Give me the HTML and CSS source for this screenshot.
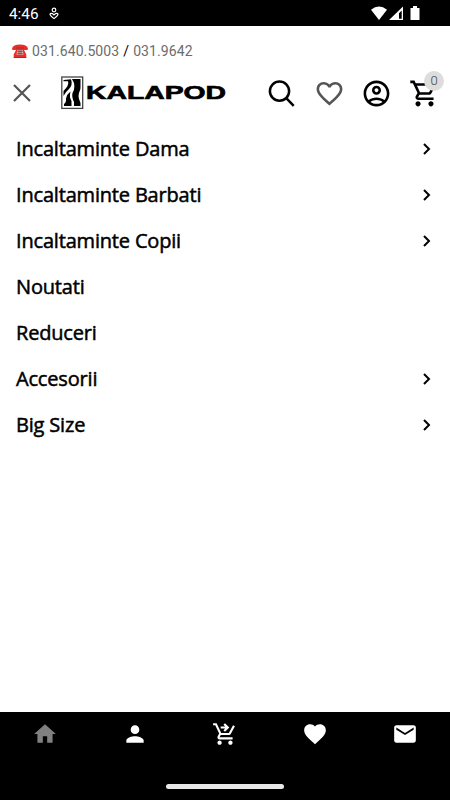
FILE: index.html
```html
<!DOCTYPE html>
<html lang="ro">
<head>
    <meta charset="UTF-8">
    <meta name="viewport" content="width=device-width, initial-scale=1.0">
    <title>Kalapod</title>
    <link rel="stylesheet" href="styles.css">
</head>
<body>
    <div class="status-bar">
        <span class="clock">4:46</span>
        <svg class="status-app" viewBox="0 0 10 14" width="10" height="14">
            <circle cx="5" cy="3" r="1.8"/>
            <path d="M3.4 6.6 Q1.5 5.8 1 7.2 Q1 8.4 5 11.6 Q9 8.4 9 7.2 Q8.500 5.800 6.600 6.600 L5 8 Z"/>
        </svg>
        <svg class="status-system" viewBox="0 0 50 16" width="50" height="16">
            <path d="M0 3.7 Q8 -2.7 16 3.7 L8 14 Z"/>
            <path fill-rule="evenodd" d="M32 0.5 V14 H18 Z M30.7 4.5 L28 7.2 V12.7 H30.7 Z"/>
            <path d="M39.5 2 H42 V0 H46 V2 H48.5 V14 H39.5 Z"/>
        </svg>
    </div>

    <div class="phone-row">
        <svg class="phone-icon" viewBox="0 0 16 14" width="16" height="14">
            <path fill="#e8302a" d="M0 4.500 Q1 0.500 8 0.500 Q15 0.500 16 4.500 L15.500 6 H12 L14.300 10.500 V13.500 H1.700 V10.500 L4 6 H0.500 Z"/>
            <path fill="#a82a25" d="M4 3.500 H12 V4.500 H4 Z M1.700 13 H14.300 V14 H1.700 Z"/>
            <path fill="#f3dddd" d="M5.500 6 H10.500 L11.500 10.500 H4.500 Z"/>
            <path stroke="#6b3030" stroke-width="0.8" d="M5.300 7.300 H10.700 M5 9.300 H11 M7 6 V10.500 M9 6 V10.500"/>
        </svg>
        <a class="phone">031.640.5003</a>
        <span class="slash">/</span>
        <a class="phone">031.9642</a>
    </div>

    <header class="header">
        <svg class="close" viewBox="0 0 18 18" width="18" height="18">
            <path d="M1 1 L17 17 M17 1 L1 17"/>
        </svg>
        <svg class="logo" viewBox="0 0 166 34" width="166" height="34">
            <rect x="0.8" y="1" width="20.9" height="31.400" fill="#fff" stroke="#444" stroke-width="1.300"/>
            <path d="M11 3 H19.500 V10 Q20 13 18 17 Q17 20 18 23 L19.500 27 V30 H13 V26 Q10.500 21 11.500 17 Q15.500 10 11 3 Z"/>
            <path d="M2.500 4 L10 3.300 Q12 9 8 13 Q4.500 16 2.500 20 V15 Q8.500 9 7 5.300 L2.500 5.300 Z"/>
            <path d="M9.500 15.500 Q8 21 10.500 25 V30 H3 V28 Q5.500 26 5 22.500 Q6 18 9.500 15.500 Z"/>
            <text class="logo-text" x="25" y="23" textLength="140" lengthAdjust="spacingAndGlyphs">KALAPOD</text>
        </svg>
        <div class="actions">
            <svg class="icon search" viewBox="0 0 30 30" width="30" height="30">
                <circle cx="13.500" cy="12.700" r="9.600"/>
                <path d="M20.300 19.700 L27.700 27.300"/>
            </svg>
            <svg class="icon wish" viewBox="0 0 24 24">
                <path d="M16.5 3c-1.74 0-3.41.81-4.5 2.09C10.91 3.81 9.24 3 7.5 3 4.42 3 2 5.42 2 8.5c0 3.78 3.4 6.86 8.55 11.54L12 21.35l1.45-1.32C18.6 15.36 22 12.28 22 8.5 22 5.42 19.58 3 16.5 3zm-4.4 15.55l-.1.1-.1-.1C7.14 14.24 4 11.39 4 8.5 4 6.5 5.5 5 7.5 5c1.54 0 3.04.99 3.57 2.36h1.87C13.46 5.99 14.96 5 16.5 5c2 0 3.5 1.5 3.5 3.5 0 2.89-3.14 5.74-7.9 10.05z"/>
            </svg>
            <svg class="icon account" viewBox="0 0 24 24">
                <path d="M12 2C6.48 2 2 6.48 2 12s4.48 10 10 10 10-4.48 10-10S17.52 2 12 2zM7.35 18.5C8.66 17.56 10.26 17 12 17s3.34.56 4.65 1.5C15.34 19.44 13.74 20 12 20s-3.34-.56-4.65-1.5zm10.79-1.38C16.45 15.8 14.32 15 12 15s-4.45.8-6.14 2.12C4.7 15.73 4 13.95 4 12c0-4.42 3.58-8 8-8s8 3.58 8 8c0 1.95-.7 3.73-1.86 5.12z"/>
                <path d="M12 6c-1.93 0-3.5 1.57-3.5 3.5S10.07 13 12 13s3.5-1.57 3.5-3.5S13.93 6 12 6zm0 5c-.83 0-1.5-.67-1.5-1.5S11.17 8 12 8s1.5.67 1.5 1.5S12.83 11 12 11z"/>
            </svg>
            <div class="cart">
                <svg class="icon" viewBox="0 0 24 24">
                    <path d="M15.55 13c.75 0 1.41-.41 1.75-1.03l3.58-6.49c.37-.66-.11-1.48-.87-1.48H5.21l-.94-2H1v2h2l3.6 7.59-1.35 2.44C4.52 15.37 5.48 17 7 17h12v-2H7l1.1-2h7.45zM6.16 6h12.15l-2.76 5H8.53L6.16 6zM7 18c-1.1 0-1.99.9-1.99 2S5.9 22 7 22s2-.9 2-2-.9-2-2-2zm10 0c-1.1 0-1.99.9-1.99 2s.89 2 1.99 2 2-.9 2-2-.9-2-2-2z"/>
                </svg>
                <span class="badge">0</span>
            </div>
        </div>
    </header>

    <nav class="menu">
        <a class="menu-item">Incaltaminte Dama <svg class="arrow" viewBox="0 0 8 12"><path d="M1 1 L6 6 L1 11"/></svg></a>
        <a class="menu-item">Incaltaminte Barbati <svg class="arrow" viewBox="0 0 8 12"><path d="M1 1 L6 6 L1 11"/></svg></a>
        <a class="menu-item">Incaltaminte Copii <svg class="arrow" viewBox="0 0 8 12"><path d="M1 1 L6 6 L1 11"/></svg></a>
        <a class="menu-item">Noutati</a>
        <a class="menu-item">Reduceri</a>
        <a class="menu-item">Accesorii <svg class="arrow" viewBox="0 0 8 12"><path d="M1 1 L6 6 L1 11"/></svg></a>
        <a class="menu-item">Big Size <svg class="arrow" viewBox="0 0 8 12"><path d="M1 1 L6 6 L1 11"/></svg></a>
    </nav>

    <footer class="bottom-bar">
        <div class="tabs">
            <svg class="tab active" viewBox="0 0 24 24"><path d="M10 20v-6h4v6h5v-8h3L12 3 2 12h3v8z"/></svg>
            <svg class="tab" viewBox="0 0 24 24"><path d="M12 12c2.21 0 4-1.79 4-4s-1.79-4-4-4-4 1.79-4 4 1.79 4 4 4zm0 2c-2.67 0-8 1.34-8 4v2h16v-2c0-2.66-5.33-4-8-4z"/></svg>
            <svg class="tab" viewBox="0 0 24 24"><path d="M7 18c-1.1 0-1.99.9-1.99 2S5.9 22 7 22s2-.9 2-2-.9-2-2-2zm10 0c-1.1 0-1.99.9-1.99 2s.89 2 1.99 2 2-.9 2-2-.9-2-2-2zM8.1 13h7.45c.75 0 1.41-.41 1.75-1.03L21.16 4.96 19.42 4l-3.87 7H8.53L4.27 2H1v2h2l3.6 7.59-1.35 2.44C4.52 15.37 5.48 17 7 17h12v-2H7l1.1-2zM12 2l4 4-4 4-1.41-1.41L12.17 7H8V5h4.17l-1.59-1.59L12 2z"/></svg>
            <svg class="tab" viewBox="0 0 24 24"><path d="M12 21.35l-1.45-1.32C5.4 15.36 2 12.28 2 8.5 2 5.42 4.42 3 7.5 3c1.74 0 3.41.81 4.5 2.09C13.09 3.81 14.76 3 16.5 3 19.58 3 22 5.42 22 8.5c0 3.78-3.4 6.86-8.55 11.54L12 21.35z"/></svg>
            <svg class="tab" viewBox="0 0 24 24"><path d="M20 4H4c-1.1 0-1.99.9-1.99 2L2 18c0 1.1.9 2 2 2h16c1.1 0 2-.9 2-2V6c0-1.1-.9-2-2-2zm0 4l-8 5-8-5V6l8 5 8-5v2z"/></svg>
        </div>
        <div class="home-indicator"></div>
    </footer>
</body>
</html>
```

FILE: styles.css
```css
* {
    box-sizing: border-box;
}

body {
    margin: 0;
    height: 800px;
    display: flex;
    flex-direction: column;
    overflow: hidden;
    background-color: #fff;
    color: #000;
    font-family: Roboto, sans-serif;
}

svg {
    display: block;
    flex: none;
}

.status-bar {
    height: 26px;
    display: flex;
    align-items: center;
    padding: 2px 29px 0 9px;
    background-color: #000;
    color: #fff;
}

.clock {
    font-size: 15.3px;
    line-height: 26px;
}

.status-app {
    margin-left: 10px;
    fill: none;
    stroke: #fff;
    stroke-width: 1.2;
}

.status-system {
    margin-left: auto;
    fill: #fff;
}

/* Phone numbers */
.phone-row {
    height: 50px;
    display: flex;
    align-items: center;
    padding-left: 12px;
    font-size: 14px;
    letter-spacing: 0.1px;
}

.phone {
    color: #6c6c6c;
}

.phone-icon {
    margin-right: 4px;
}

.slash {
    margin: 0 4px;
}

/* Header */
.header {
    height: 34px;
    display: flex;
    align-items: center;
    padding: 0 5px 0 13px;
}

.close {
    fill: none;
    stroke: #555;
    stroke-width: 2.2;
}

.logo {
    margin-left: 30px;
}

.logo-text {
    font-family: "Liberation Sans", Arial, sans-serif;
    font-size: 17.5px;
    font-weight: bold;
    stroke: #000;
    stroke-width: 0.6;
}

.actions {
    display: flex;
    flex: 1;
    margin-left: 39px;
}

.icon {
    width: 31px;
    height: 31px;
}

.search {
    width: 30px;
    fill: none;
    stroke: #000;
    stroke-width: 2.5;
}

.wish {
    margin-left: 18px;
    fill: #555;
}

.account {
    margin-left: 16px;
}

.cart {
    position: relative;
    margin-left: 17px;
}

.badge {
    position: absolute;
    top: -7px;
    left: 15px;
    width: 20px;
    height: 20px;
    border-radius: 50%;
    background-color: #ddd;
    color: #444;
    font-size: 13px;
    font-weight: 300;
    line-height: 20px;
    text-align: center;
}

/* Menu */
.menu {
    flex: 1;
    padding-top: 15px;
}

.menu-item {
    height: 46px;
    display: flex;
    align-items: center;
    justify-content: space-between;
    padding: 0 19px 0 16px;
    font-family: "Open Sans", sans-serif;
    font-size: 20px;
    letter-spacing: -0.18px;
    -webkit-text-stroke: 0.5px #000;
}

.arrow {
    width: 8px;
    height: 12px;
    margin-top: 2px;
    fill: none;
    stroke: #000;
    stroke-width: 2;
}

/* Bottom bar */
.bottom-bar {
    height: 88px;
    display: flex;
    flex-direction: column;
    align-items: center;
    background-color: #000;
}

.tabs {
    width: 100%;
    height: 72px;
    display: grid;
    grid-template-columns: repeat(5, 1fr);
    justify-items: center;
    padding-top: 9px;
}

.tab {
    width: 26px;
    height: 26px;
    fill: #fff;
}

.active {
    fill: #808080;
}

.home-indicator {
    width: 118px;
    height: 5px;
    border-radius: 3px;
    background-color: #e8e8e8;
}
```
